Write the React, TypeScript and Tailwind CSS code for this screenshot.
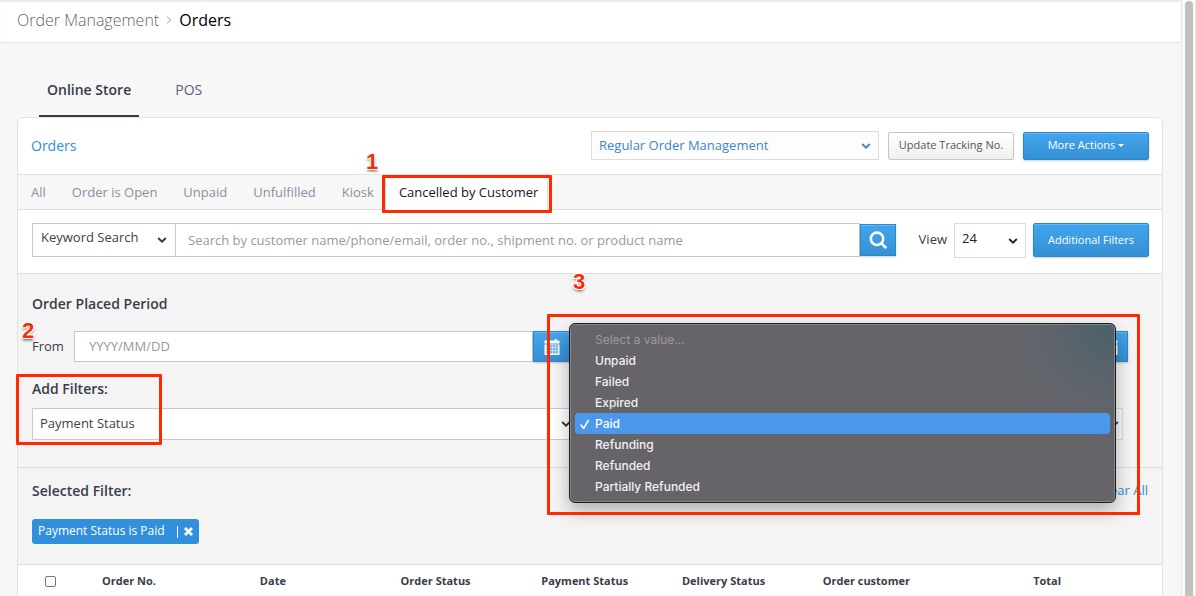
import type { ReactNode } from "react";

const periodInput =
  "h-[31px] min-w-0 flex-1 border border-[#c9c9c9] bg-white px-[14px] pb-px text-[13px] text-[#555] outline-none placeholder:text-[#999]";
const blueButton =
  "border border-[#2d87c8] bg-linear-to-b from-[#42a5f0] to-[#3590d2] text-white shadow-[inset_0_1px_0_#64b7f3,0_1px_2px_rgba(0,0,0,0.2)]";

function Chevron({ className }: { className: string }) {
  return (
    <svg viewBox="0 0 10 6" className={`pointer-events-none absolute h-[6px] w-[10px] ${className}`} fill="none" stroke="currentColor" strokeWidth="1.8" aria-hidden="true">
      <path d="M1.2 1l3.8 3.7L8.8 1" />
    </svg>
  );
}

function Callout({ className, children }: { className: string; children: ReactNode }) {
  return (
    <span
      className={`pointer-events-none absolute z-30 font-['Liberation_Sans',sans-serif] text-[22px] leading-5 font-bold text-[#ff2a00] [text-shadow:1px_0_#fff,-1px_0_#fff,0_1px_#fff,0_-1px_#fff,1px_1px_#fff,-1px_-1px_#fff,1px_-1px_#fff,-1px_1px_#fff,0_2px_3px_rgba(0,0,0,0.7)] ${className}`}
    >
      {children}
    </span>
  );
}

function Frame({ className }: { className: string }) {
  return <span className={`pointer-events-none absolute z-20 rounded-[1px] border-3 border-[#ff2a00] ${className}`} />;
}

function CalendarGlyph() {
  return (
    <svg viewBox="0 0 16 16" className="size-4" aria-hidden="true">
      <path fill="#fff" d="M.5 1.5h2.8V0h2v1.5h5.4V0h2v1.5h2.8v3H.5z" />
      <path fill="#fff" d="M.5 5.5h15V16H.5z" />
      <path stroke="#3c9ae0" strokeWidth=".9" d="M2 7h12M2 10h12M2 13h12M4 6.5V15M7 6.5V15M10 6.5V15M13 6.5V15" />
    </svg>
  );
}

const statuses = ["Unpaid", "Failed", "Expired", "Paid", "Refunding", "Refunded", "Partially Refunded"];

function StatusMenu() {
  return (
    <ul
      role="listbox"
      aria-label="Payment status value"
      className="absolute -top-[85px] right-[7px] -left-[11px] z-10 rounded-md border border-[#1c1c1e] bg-[radial-gradient(circle_at_top_right,#4a616b_0,#5f646b_70px,#666469_130px)] p-[5px] font-['Inter',sans-serif] text-[12px] leading-[21px] font-medium text-[#f1f1f2] shadow-[inset_0_0_0_1px_#88878b,0_8px_18px_rgba(0,0,0,0.28)]"
    >
      <li className="pl-5 font-normal text-[#9b999d]">Select a value...</li>
      {statuses.map((s) => (
        <li
          key={s}
          role="option"
          aria-selected={s === "Paid"}
          className={s === "Paid" ? "flex items-center rounded-sm bg-[#4b98ec] text-white" : "pl-5"}
        >
          {s === "Paid" && (
            <svg viewBox="0 0 20 21" className="h-[21px] w-5" fill="none" stroke="#fff" strokeWidth="1.6" strokeLinecap="round" strokeLinejoin="round" aria-hidden="true">
              <path d="M6 12l2.7 3.3L13.3 7.5" />
            </svg>
          )}
          {s}
        </li>
      ))}
    </ul>
  );
}

export default function App() {
  return (
    <div className="flex h-screen overflow-hidden bg-[#f7f7f7] font-['Open_Sans','Noto_Sans',sans-serif] text-[13px] text-[#373d4b]">
      <main className="min-w-0 flex-1">
        <header className="flex h-[43px] items-center border-b border-[#e4e4e4] bg-white pb-[2px] pl-[17px] text-[16px] shadow-[inset_0_2px_1px_#ececec]">
          <nav aria-label="Breadcrumb" className="flex items-center">
            <a href="#" className="font-light text-[#666]">Order Management</a>
            <svg viewBox="0 0 6 8" className="mx-[7px] h-2 w-[6px]" fill="none" stroke="#b5bbc9" strokeWidth="1.2" aria-hidden="true">
              <path d="M1 .6L4.8 4 1 7.4" />
            </svg>
            <span className="text-black">Orders</span>
          </nav>
        </header>

        <div className="pr-[18px] pl-[17px]">
          <nav className="flex pt-5 pl-[22px] text-[14px]">
            <a href="#" className="h-[54px] border-b-2 border-[#343b4b] px-2 leading-[54px] font-semibold text-[#343b4b]">Online Store</a>
            <a href="#" className="ml-[28px] h-[54px] px-2 leading-[54px] text-[#555f7d]">POS</a>
          </nav>

          <section className="rounded-t-md border border-[#e2e2e2] bg-white">
            <div className="flex h-[57px] items-center gap-[9px] border-b border-[#e2e2e2] pr-[13px] pb-px pl-[13px]">
              <h1 className="mr-auto text-[14px] text-[#2a8fdc]">Orders</h1>
              <div className="relative">
                <select aria-label="Order management mode" className="block h-[29px] w-[288px] appearance-none border border-[#dcdcdc] bg-[#fdfdfd] pl-[7px] text-[13px] text-[#3a87c8] outline-none">
                  <option>Regular Order Management</option>
                </select>
                <Chevron className="top-3 right-2 text-[#3a87c8]" />
              </div>
              <button className="h-[28px] w-[126px] rounded-[2px] border border-[#c6c6c6] bg-linear-to-b from-white to-[#f0f0f0] text-[11px] text-[#555]">Update Tracking No.</button>
              <button className={`flex h-[28px] w-[126px] items-center justify-center gap-[3px] rounded-[2px] text-[11px] font-medium ${blueButton}`}>
                More Actions
                <svg viewBox="0 0 6 3" className="h-[3px] w-[6px]" aria-hidden="true"><path d="M0 0h6L3 3z" fill="#fff" /></svg>
              </button>
            </div>

            <nav className="flex h-[35px] border-b border-[#dcdcdc] bg-[#f7f7f7] leading-[34px] text-[#8a8fa0]">
              <a href="#" className="px-[13px]">All</a>
              <a href="#" className="px-[13px]">Order is Open</a>
              <a href="#" className="px-[13px]">Unpaid</a>
              <a href="#" className="px-[13px]">Unfulfilled</a>
              <a href="#" className="pr-[11px] pl-[13px]">Kiosk</a>
              <a href="#" className="relative h-[35px] border-x border-[#dcdcdc] bg-white pr-[9px] pl-[13px] text-[#15181f]">
                Cancelled by Customer
                <Frame className="top-0 -right-[5px] -bottom-[3px] -left-[4px]" />
                <Callout className="-top-[23px] -left-5">1</Callout>
              </a>
            </nav>

            <form className="flex h-[64px] items-center border-b border-[#dcdcdc] pr-[13px] pb-[3px] pl-[14px]" onSubmit={(e) => e.preventDefault()}>
              <div className="relative">
                <select aria-label="Search field" className="block h-[34px] w-[143px] appearance-none border border-r-0 border-[#c9c9c9] bg-white pb-1 pl-[8px] text-[13px] text-[#3d414b] outline-none">
                  <option>Keyword Search</option>
                </select>
                <Chevron className="top-[14px] right-2 text-[#333]" />
              </div>
              <input
                aria-label="Search orders"
                placeholder="Search by customer name/phone/email, order no., shipment no. or product name"
                className="h-[34px] min-w-0 flex-1 border border-[#c9c9c9] px-3 text-[13px] outline-none placeholder:text-[#999]"
              />
              <button aria-label="Search" className={`flex h-[32px] w-[36px] items-center justify-center ${blueButton}`}>
                <svg viewBox="0 0 18 18" className="size-[18px]" fill="none" stroke="#fff" strokeWidth="2.6" aria-hidden="true">
                  <circle cx="8" cy="7.8" r="6.2" />
                  <path d="M12.3 12.2l5 4.9" />
                </svg>
              </button>
              <label htmlFor="view" className="mr-[7px] ml-[23px]">View</label>
              <div className="relative mr-[7px]">
                <select id="view" className="block h-[35px] w-[72px] appearance-none border border-[#dcdcdc] bg-white pb-[2px] pl-[7px] text-[13px] text-[#222] outline-none">
                  <option>24</option>
                </select>
                <Chevron className="top-[15px] right-2 text-[#222]" />
              </div>
              <button className={`h-[34px] w-[116px] rounded-[2px] text-[11px] font-medium ${blueButton}`}>Additional Filters</button>
            </form>

            <div className="border-b border-[#dcdcdc] bg-[#f4f4f4] pt-5 pr-[34px] pb-[27px] pl-[14px]">
              <h2 className="text-[14px] leading-5 font-semibold">Order Placed Period</h2>
              <div className="relative mt-[17px] flex items-center">
                <Callout className="-top-[10px] -left-[10px]">2</Callout>
                <label htmlFor="from" className="w-[42px]">From</label>
                <input id="from" placeholder="YYYY/MM/DD" className={periodInput} />
                <button aria-label="Pick start date" className={`flex h-[31px] w-[37px] items-center justify-center ${blueButton}`}>
                  <CalendarGlyph />
                </button>
                <label htmlFor="to" className="w-[62px] pl-[5px]">To</label>
                <input id="to" placeholder="YYYY/MM/DD" className={periodInput} />
                <button aria-label="Pick end date" className={`flex h-[31px] w-[37px] items-center justify-center ${blueButton}`}>
                  <CalendarGlyph />
                </button>
              </div>
              <div className="relative mt-[17px]">
                <Frame className="-top-[5px] -bottom-[5px] -left-[16px] w-[146px]" />
                <h2 className="text-[14px] leading-5 font-semibold">Add Filters:</h2>
                <div className="mt-[9px] mr-[5px] flex gap-[5px]">
                  <div className="relative flex-1">
                    <select aria-label="Filter" className="block h-[32px] w-full appearance-none border border-[#c9c9c9] bg-white pl-[7px] text-[13px] text-[#3d414b] outline-none">
                      <option>Payment Status</option>
                    </select>
                    <Chevron className="top-[13px] right-1 text-[#333]" />
                  </div>
                  <div className="relative flex-1">
                    <select aria-label="Filter value" className="block h-[32px] w-full appearance-none border border-[#dcdcdc] bg-[#f8f8f8] pl-[7px] text-[13px] text-[#3d414b] outline-none">
                      <option>Paid</option>
                    </select>
                    <Chevron className="top-[13px] right-1 text-[#333]" />
                    <StatusMenu />
                    <Frame className="-top-[94px] -right-[17px] -bottom-[75px] -left-[33px]" />
                    <Callout className="-top-[136px] -left-[7px]">3</Callout>
                  </div>
                </div>
              </div>
            </div>

            <div className="border-b border-[#dcdcdc] bg-[#f4f4f4] pt-[13px] pr-[14px] pb-5 pl-[14px]">
              <div className="flex items-start justify-between">
                <h2 className="text-[14px] leading-5 font-semibold">Selected Filter:</h2>
                <a href="#" className="leading-[18px] text-[#2f8fd6]">Clear All</a>
              </div>
              <div className="mt-[18px] inline-flex h-[25px] items-center rounded-[3px] bg-[#318fdc] px-[6px] align-top text-[12px] text-white">
                <span className="pb-[2px]">Payment Status is Paid</span>
                <button aria-label="Remove filter" className="ml-3 flex h-3 items-center border-l border-white pl-[6px]">
                  <svg viewBox="0 0 9 9" className="size-[9px]" stroke="#fff" strokeWidth="2.8" aria-hidden="true">
                    <path d="M1 1l7 7M8 1L1 8" />
                  </svg>
                </button>
              </div>
            </div>

            <table className="w-full table-fixed text-left text-[11px]">
              <thead>
                <tr className="h-[32px] font-bold">
                  <th className="w-[76px] pl-[27px]">
                    <input type="checkbox" aria-label="Select all orders" className="block size-[11px] appearance-none rounded-[2px] border border-[#777] bg-white" />
                  </th>
                  <th className="w-[13.8%] pl-2">Order No.</th>
                  <th className="w-[12.3%] pl-2">Date</th>
                  <th className="w-[12.3%] pl-2">Order Status</th>
                  <th className="w-[12.3%] pl-2">Payment Status</th>
                  <th className="w-[12.3%] pl-2">Delivery Status</th>
                  <th className="w-[18.4%] pl-2">Order customer</th>
                  <th className="pl-2">Total</th>
                </tr>
              </thead>
            </table>
          </section>
        </div>
      </main>
      <div className="flex w-[15px] justify-center border-x border-[#e6e6e6] bg-[#fafafa] pt-px" aria-hidden="true">
        <div className="w-2 rounded-t-full bg-[#c1c1c1]" />
      </div>
    </div>
  );
}
